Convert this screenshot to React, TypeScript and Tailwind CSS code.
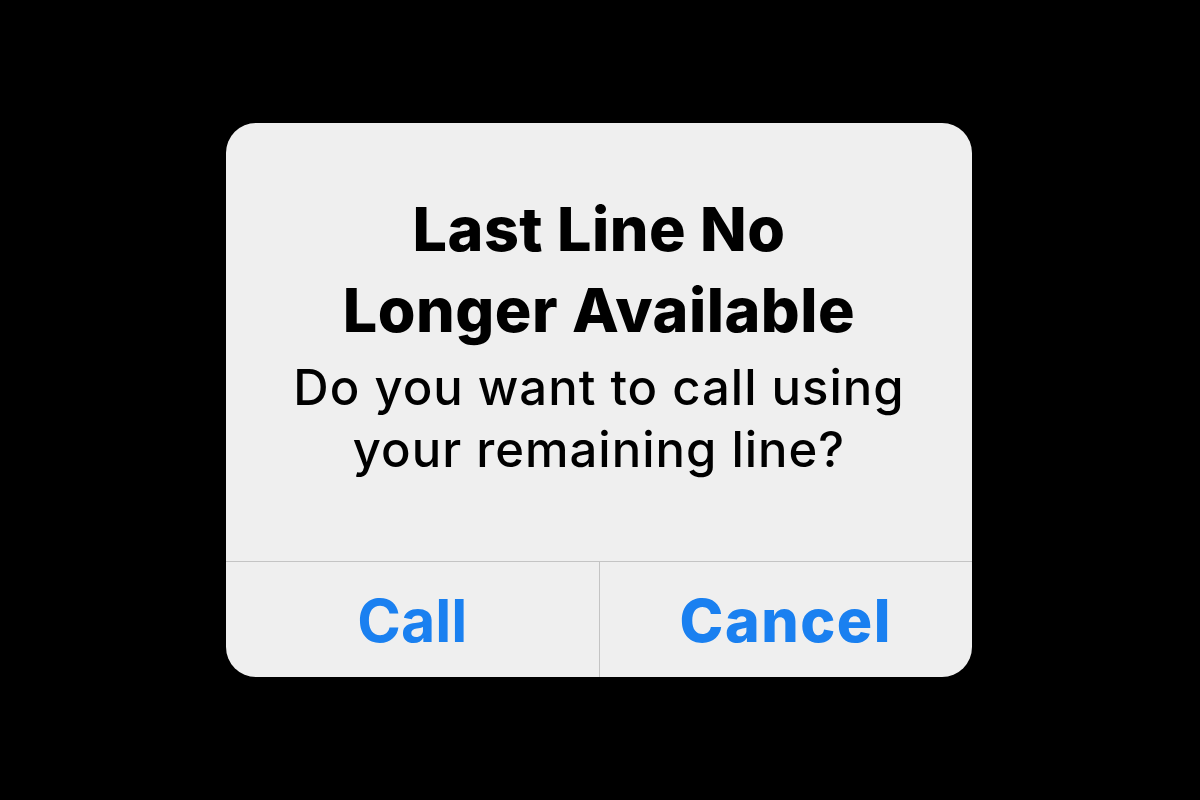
export default function App() {
  return (
    <div className="flex h-[800px] w-[1200px] items-start justify-center bg-black pt-[123px] font-['Inter',sans-serif]">
      <div className="ml-[-2px] flex h-[554px] w-[746px] flex-col overflow-hidden rounded-[30px] bg-[#efefef]">
        <div className="flex flex-1 flex-col items-center pt-[66px] text-center text-black">
          <h1 className="text-[61px] font-extrabold leading-[81px] tracking-[0.5px]">
            Last Line No
            <br />
            Longer Available
          </h1>
          <p className="mt-[6px] text-[49px] font-medium leading-[62px] tracking-[1px]">
            Do you want to call using
            <br />
            your remaining line?
          </p>
        </div>
        <div className="flex h-[116px] border-t border-[#c4c4c4] pt-[4px] text-[#1a80f0]">
          <button className="flex flex-1 items-center justify-center text-[59px] font-bold">
            Call
          </button>
          <div className="-mt-[4px] w-px bg-[#c4c4c4]" />
          <button className="flex flex-1 items-center justify-center text-[59px] font-extrabold tracking-[1.5px]">
            Cancel
          </button>
        </div>
      </div>
    </div>
  )
}
